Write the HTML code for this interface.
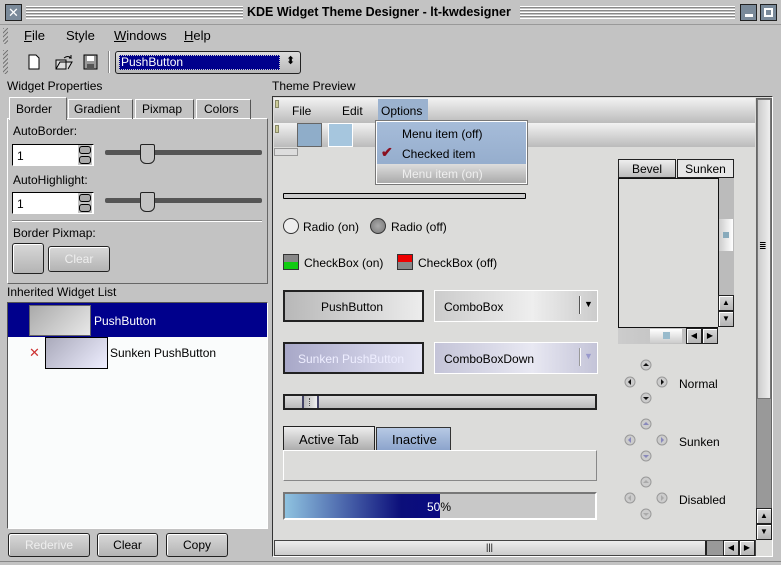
<!DOCTYPE html><html><head><style>
*{margin:0;padding:0;box-sizing:border-box}
body{width:781px;height:565px;background:#c3c3c3;font-family:"Liberation Sans",sans-serif;font-size:12px;position:relative;overflow:hidden;color:#000}
div,span{position:absolute}
.t{white-space:nowrap}
.btn{border:1px solid #222;border-radius:3px;background:linear-gradient(#d8d8d8,#b4b4b4);box-shadow:inset 1px 1px #fff;text-align:center}
.tex{background:#dcdcda}
</style></head><body>
<div style="left:0;top:0;width:781px;height:25px;background:#c3c3c3;border-bottom:1px solid #999"></div>
<div style="left:5px;top:4px;width:17px;height:17px;background:#7a8a9a;border:1px solid #222;color:#fff;font-size:13px;text-align:center;line-height:15px">✕</div>
<div style="left:26px;top:6px;width:217px;height:13px;background:repeating-linear-gradient(#fff 0 1px,#888 1px 2px,#c3c3c3 2px 3px)"></div>
<div class="t" style="left:247px;top:5px;font-weight:bold;font-size:12.5px">KDE Widget Theme Designer - lt-kwdesigner</div>
<div style="left:520px;top:6px;width:215px;height:13px;background:repeating-linear-gradient(#fff 0 1px,#888 1px 2px,#c3c3c3 2px 3px)"></div>
<div style="left:740px;top:4px;width:17px;height:17px;background:#7a8a9a;border:1px solid #222"><span style="left:4px;top:9px;width:8px;height:3px;background:#fff"></span></div>
<div style="left:760px;top:4px;width:17px;height:17px;background:#7a8a9a;border:1px solid #222"><span style="left:3px;top:3px;width:9px;height:9px;border:2px solid #fff"></span></div>
<div style="left:3px;top:28px;width:5px;height:16px;background:repeating-linear-gradient(135deg,#777 0 1px,#c3c3c3 1px 3px)"></div>
<div style="left:3px;top:50px;width:5px;height:24px;background:repeating-linear-gradient(135deg,#777 0 1px,#c3c3c3 1px 3px)"></div>
<div class="t" style="left:24px;top:28px;font-size:13px"><u>F</u>ile</div>
<div class="t" style="left:66px;top:28px;font-size:13px">Style</div>
<div class="t" style="left:114px;top:28px;font-size:13px"><u>W</u>indows</div>
<div class="t" style="left:184px;top:28px;font-size:13px"><u>H</u>elp</div>
<svg style="position:absolute;left:26px;top:53px" width="80" height="18"><path d="M3 2h7l3 3v11H3z" fill="#fff" stroke="#000"/><path d="M30 7h10v9H30zM30 16l4-7h12l-4 7" fill="#ddd" stroke="#000"/><path d="M38 5q4-3 7 0l-2 0M45 5v-3" fill="none" stroke="#000"/><rect x="58" y="2" width="13" height="14" fill="#999" stroke="#000"/><rect x="61" y="3" width="7" height="5" fill="#fff"/><rect x="61" y="11" width="7" height="5" fill="#555"/></svg>
<div style="left:108px;top:51px;width:2px;height:22px;border-left:1px solid #888;border-right:1px solid #fff"></div>
<div style="left:115px;top:51px;width:186px;height:23px;border:1px solid #222;border-radius:3px;background:linear-gradient(#ddd,#b8b8b8)"></div>
<div style="left:119px;top:55px;width:161px;height:15px;background:#00008c;border:1px dotted #ccc"></div>
<div class="t" style="left:121px;top:55px;color:#fff;font-size:12px">PushButton</div>
<div class="t" style="left:286px;top:54px;font-size:11px">⬍</div>
<div class="t" style="left:7px;top:79px">Widget Properties</div>
<div style="left:7px;top:118px;width:261px;height:166px;border:1px solid;border-color:#fff #666 #666 #fff"></div>
<div class="t" style="left:9px;top:97px;width:58px;height:23px;border:1px solid #fff;border-bottom:none;border-right-color:#666;background:#c3c3c3;padding:4px 0 0 6px">Border</div>
<div class="t" style="left:68px;top:99px;width:65px;height:20px;border:1px solid #fff;border-right-color:#555;border-bottom:none;padding:2px 0 0 5px">Gradient</div>
<div class="t" style="left:135px;top:99px;width:59px;height:20px;border:1px solid #fff;border-right-color:#555;border-bottom:none;padding:2px 0 0 6px">Pixmap</div>
<div class="t" style="left:196px;top:99px;width:55px;height:20px;border:1px solid #fff;border-right-color:#555;border-bottom:none;padding:2px 0 0 7px">Colors</div>
<div class="t" style="left:13px;top:124px">AutoBorder:</div>
<div style="left:12px;top:144px;width:82px;height:22px;background:#fff;border:1px solid;border-color:#000 #fff #fff #000"><span class="t" style="left:4px;top:4px">1</span></div>
<div style="left:78px;top:145px;width:14px;height:20px;background:#c3c3c3"><span style="left:1px;top:1px;width:12px;height:8px;border:1px solid #000;border-radius:3px;background:#aaa"></span><span style="left:1px;top:11px;width:12px;height:8px;border:1px solid #000;border-radius:3px;background:#aaa"></span></div>
<div style="left:105px;top:150px;width:157px;height:5px;background:#555;border-radius:2px"></div>
<div style="left:140px;top:144px;width:15px;height:20px;background:#c3c3c3;border:1px solid #222;border-radius:2px 2px 6px 6px"></div>
<div class="t" style="left:13px;top:173px">AutoHighlight:</div>
<div style="left:12px;top:192px;width:82px;height:22px;background:#fff;border:1px solid;border-color:#000 #fff #fff #000"><span class="t" style="left:4px;top:4px">1</span></div>
<div style="left:78px;top:193px;width:14px;height:20px;background:#c3c3c3"><span style="left:1px;top:1px;width:12px;height:8px;border:1px solid #000;border-radius:3px;background:#aaa"></span><span style="left:1px;top:11px;width:12px;height:8px;border:1px solid #000;border-radius:3px;background:#aaa"></span></div>
<div style="left:105px;top:198px;width:157px;height:5px;background:#555;border-radius:2px"></div>
<div style="left:140px;top:192px;width:15px;height:20px;background:#c3c3c3;border:1px solid #222;border-radius:2px 2px 6px 6px"></div>
<div style="left:12px;top:220px;width:250px;height:2px;border-top:1px solid #888;border-bottom:1px solid #fff"></div>
<div class="t" style="left:13px;top:226px">Border Pixmap:</div>
<div class="btn" style="left:12px;top:243px;width:32px;height:31px"></div>
<div class="btn" style="left:48px;top:246px;width:62px;height:26px;color:#eee;line-height:24px">Clear</div>
<div class="t" style="left:7px;top:285px">Inherited Widget List</div>
<div style="left:7px;top:302px;width:261px;height:227px;background:#fafcfc;border:1px solid;border-color:#555 #fff #fff #555"></div>
<div style="left:8px;top:303px;width:259px;height:34px;background:#00008c"></div>
<div style="left:29px;top:305px;width:62px;height:31px;background:linear-gradient(135deg,#aaa,#e8e8e8);border:1px solid #666"></div>
<div class="t" style="left:94px;top:314px;color:#fff">PushButton</div>
<div class="t" style="left:29px;top:345px;color:#c33;font-size:13px">✕</div>
<div style="left:45px;top:337px;width:63px;height:32px;background:linear-gradient(135deg,#aab,#eef);border:1px solid #000"></div>
<div class="t" style="left:110px;top:346px">Sunken PushButton</div>
<div class="btn" style="left:8px;top:533px;width:82px;height:24px;line-height:22px;color:#eee">Rederive</div>
<div class="btn" style="left:97px;top:533px;width:61px;height:24px;line-height:22px">Clear</div>
<div class="btn" style="left:166px;top:533px;width:62px;height:24px;line-height:22px">Copy</div>
<div class="t" style="left:272px;top:79px">Theme Preview</div>
<div class="tex" style="left:272px;top:96px;width:501px;height:461px;border:1px solid;border-color:#333 #fff #fff #333"></div>
<div style="left:274px;top:98px;width:481px;height:25px;background:linear-gradient(#f2f2f2,#bbb)"></div>
<div style="left:274px;top:123px;width:481px;height:24px;background:linear-gradient(#f2f2f2,#bbb)"></div>
<div style="left:275px;top:100px;width:4px;height:8px;background:#cc9;border:1px solid #886"></div>
<div style="left:275px;top:125px;width:4px;height:8px;background:#cc9;border:1px solid #886"></div>
<div style="left:274px;top:148px;width:24px;height:8px;background:#ddd;border:1px solid #999"></div>
<div style="left:297px;top:123px;width:25px;height:24px;background:#8fadc9;border:1px solid #666"></div>
<div style="left:328px;top:123px;width:25px;height:24px;background:#a6c6de;border:1px solid #fff"></div>
<div class="t" style="left:292px;top:104px">File</div>
<div class="t" style="left:342px;top:104px">Edit</div>
<div class="t" style="left:378px;top:99px;width:50px;height:23px;background:#9bb2cf;padding:5px 3px">Options</div>
<div style="left:376px;top:121px;width:151px;height:63px;border:1px solid #fff;outline:1px solid #777;background:linear-gradient(#a6bcd9,#8ea7c8)"></div>
<div style="left:377px;top:164px;width:149px;height:19px;background:linear-gradient(#ddd,#aaa)"></div>
<div class="t" style="left:402px;top:127px">Menu item (off)</div>
<div class="t" style="left:381px;top:144px;color:#8a1020;font-size:14px;font-weight:bold">✔</div>
<div class="t" style="left:402px;top:147px">Checked item</div>
<div class="t" style="left:402px;top:167px;color:#eee">Menu item (on)</div>
<div style="left:283px;top:193px;width:243px;height:6px;border:1px solid #000;background:#ccc;border-radius:1px"></div>
<div style="left:283px;top:218px;width:16px;height:16px;border-radius:50%;border:1px solid #333;background:#eee"></div>
<div class="t" style="left:303px;top:220px">Radio (on)</div>
<div style="left:370px;top:218px;width:16px;height:16px;border-radius:50%;border:1px solid #333;background:radial-gradient(#aaa,#777)"></div>
<div class="t" style="left:391px;top:220px">Radio (off)</div>
<div style="left:283px;top:254px;width:16px;height:16px;border:1px solid #333;background:linear-gradient(#888 50%,#1c1 50%)"></div>
<div class="t" style="left:304px;top:256px">CheckBox (on)</div>
<div style="left:397px;top:254px;width:16px;height:16px;border:1px solid #333;background:linear-gradient(#e00 50%,#888 50%)"></div>
<div class="t" style="left:418px;top:256px">CheckBox (off)</div>
<div style="left:283px;top:290px;width:141px;height:32px;border:2px solid #222;background:linear-gradient(90deg,#b8b8b8,#ececec)"></div>
<div class="t" style="left:321px;top:300px">PushButton</div>
<div style="left:434px;top:290px;width:164px;height:32px;border:1px solid #fff;background:linear-gradient(90deg,#ccc,#eee 60%,#ccc)"></div>
<div class="t" style="left:444px;top:300px">ComboBox</div>
<div style="left:579px;top:296px;width:2px;height:18px;border-left:1px solid #555;border-right:1px solid #fff"></div>
<div class="t" style="left:584px;top:299px;font-size:9px">▼</div>
<div style="left:283px;top:342px;width:141px;height:32px;border:2px solid #222;background:linear-gradient(90deg,#a8a8c8,#e4e4f4)"></div>
<div class="t" style="left:298px;top:352px;color:#eef">Sunken PushButton</div>
<div style="left:434px;top:342px;width:164px;height:32px;border:1px solid #fff;background:linear-gradient(90deg,#c4c4d8,#e8e8f2 60%,#c4c4d8)"></div>
<div class="t" style="left:444px;top:352px">ComboBoxDown</div>
<div style="left:579px;top:348px;width:2px;height:18px;border-left:1px solid #999;border-right:1px solid #fff"></div>
<div class="t" style="left:584px;top:351px;font-size:9px;color:#99c">▼</div>
<div style="left:283px;top:394px;width:314px;height:16px;border:2px solid #222;background:linear-gradient(#ddd,#bbb)"></div>
<div style="left:302px;top:396px;width:17px;height:12px;border-left:2px solid #446;border-right:2px solid #446;background:linear-gradient(90deg,#bbb,#eee)"><span style="left:5px;top:2px;width:3px;height:8px;border-left:1px dotted #555"></span></div>
<div class="t" style="left:283px;top:426px;width:92px;height:25px;border:1px solid #222;border-bottom:none;background:linear-gradient(#eee,#aaa);padding:5px 0 0 15px;font-size:13px">Active Tab</div>
<div class="t" style="left:376px;top:427px;width:75px;height:24px;border:1px solid #333;background:linear-gradient(#b7c9e4,#8ca4cc);padding:4px 0 0 15px;font-size:13px">Inactive</div>
<div style="left:283px;top:450px;width:314px;height:31px;border:1px solid;border-color:#fff #888 #888 #fff"></div>
<div style="left:283px;top:492px;width:314px;height:28px;border:2px solid;border-color:#777 #fff #fff #777;background:#c8c8c8"></div>
<div style="left:285px;top:494px;width:155px;height:24px;background:linear-gradient(90deg,#8fc3e0,#0b0e7a 75%,#0a0a80)"></div>
<div class="t" style="left:427px;top:500px;color:#fff">50<span style="position:static;color:#000">%</span></div>
<div style="left:618px;top:159px;width:58px;height:19px;border:1px solid #222;background:linear-gradient(#eee,#bbb);text-align:center;padding-top:2px">Bevel</div>
<div style="left:677px;top:159px;width:57px;height:19px;border:1px solid #222;background:#e6e6e6;text-align:center;padding-top:2px">Sunken</div>
<div style="left:618px;top:178px;width:100px;height:150px;border:1px solid #111;border-right:none"></div>
<div style="left:718px;top:178px;width:16px;height:117px;background:#bbb;border-left:1px solid #111"></div>
<div style="left:719px;top:219px;width:14px;height:32px;background:linear-gradient(90deg,#ccc,#fff)"><span style="left:4px;top:13px;width:6px;height:6px;background:#8ab"></span></div>
<div class="btn" style="left:718px;top:295px;width:16px;height:16px;border-radius:0;font-size:8px;line-height:13px">▲</div>
<div class="btn" style="left:718px;top:311px;width:16px;height:16px;border-radius:0;font-size:8px;line-height:13px">▼</div>
<div style="left:618px;top:328px;width:100px;height:16px;background:linear-gradient(90deg,#ccc,#bbb)"></div>
<div style="left:650px;top:329px;width:32px;height:14px;background:linear-gradient(#fff,#ccc)"><span style="left:13px;top:3px;width:7px;height:7px;background:#9bc"></span></div>
<div class="btn" style="left:686px;top:328px;width:16px;height:16px;border-radius:0;font-size:8px;line-height:13px">◀</div>
<div class="btn" style="left:702px;top:328px;width:16px;height:16px;border-radius:0;font-size:8px;line-height:13px">▶</div>
<svg style="position:absolute;left:620px;top:358px" width="60" height="165">
<g fill="#ccc" stroke="#999"><circle cx="26" cy="7" r="5"/><circle cx="10" cy="24" r="5"/><circle cx="42" cy="24" r="5"/><circle cx="26" cy="40" r="5"/>
<circle cx="26" cy="66" r="5"/><circle cx="10" cy="82" r="5"/><circle cx="42" cy="82" r="5"/><circle cx="26" cy="98" r="5"/>
<circle cx="26" cy="124" r="5"/><circle cx="10" cy="140" r="5"/><circle cx="42" cy="140" r="5"/><circle cx="26" cy="156" r="5"/></g>
<g fill="#111"><path d="M23 8h6l-3-3z"/><path d="M11 21v6l-3-3z"/><path d="M41 21v6l3-3z"/><path d="M23 39h6l-3 3z"/></g>
<g fill="#88b"><path d="M23 67h6l-3-3z"/><path d="M11 79v6l-3-3z"/><path d="M41 79v6l3-3z"/><path d="M23 97h6l-3 3z"/></g>
<g fill="#aaa"><path d="M23 125h6l-3-3z"/><path d="M11 137v6l-3-3z"/><path d="M41 137v6l3-3z"/><path d="M23 155h6l-3 3z"/></g></svg>
<div class="t" style="left:679px;top:377px">Normal</div>
<div class="t" style="left:679px;top:435px">Sunken</div>
<div class="t" style="left:679px;top:493px">Disabled</div>
<div style="left:756px;top:98px;width:16px;height:442px;background:#999;border:1px solid #666"></div>
<div style="left:757px;top:99px;width:14px;height:300px;background:linear-gradient(90deg,#ccc,#eee);border:1px solid #777"></div>
<div class="t" style="left:759px;top:241px;font-size:9px">≣</div>
<div class="btn" style="left:756px;top:508px;width:16px;height:16px;border-radius:0;font-size:8px;line-height:13px">▲</div>
<div class="btn" style="left:756px;top:524px;width:16px;height:16px;border-radius:0;font-size:8px;line-height:13px">▼</div>
<div style="left:274px;top:540px;width:482px;height:16px;background:#999;border:1px solid #444"></div>
<div style="left:275px;top:541px;width:432px;height:14px;background:linear-gradient(#eee,#ccc);border-right:2px solid #222"></div>
<div class="t" style="left:486px;top:542px;font-size:9px">|||</div>
<div class="btn" style="left:723px;top:540px;width:16px;height:16px;border-radius:0;font-size:8px;line-height:13px">◀</div>
<div class="btn" style="left:739px;top:540px;width:16px;height:16px;border-radius:0;font-size:8px;line-height:13px">▶</div>
<div style="left:0;top:561px;width:781px;height:4px;background:#c3c3c3;border-top:1px solid #888"></div>
</body></html>
